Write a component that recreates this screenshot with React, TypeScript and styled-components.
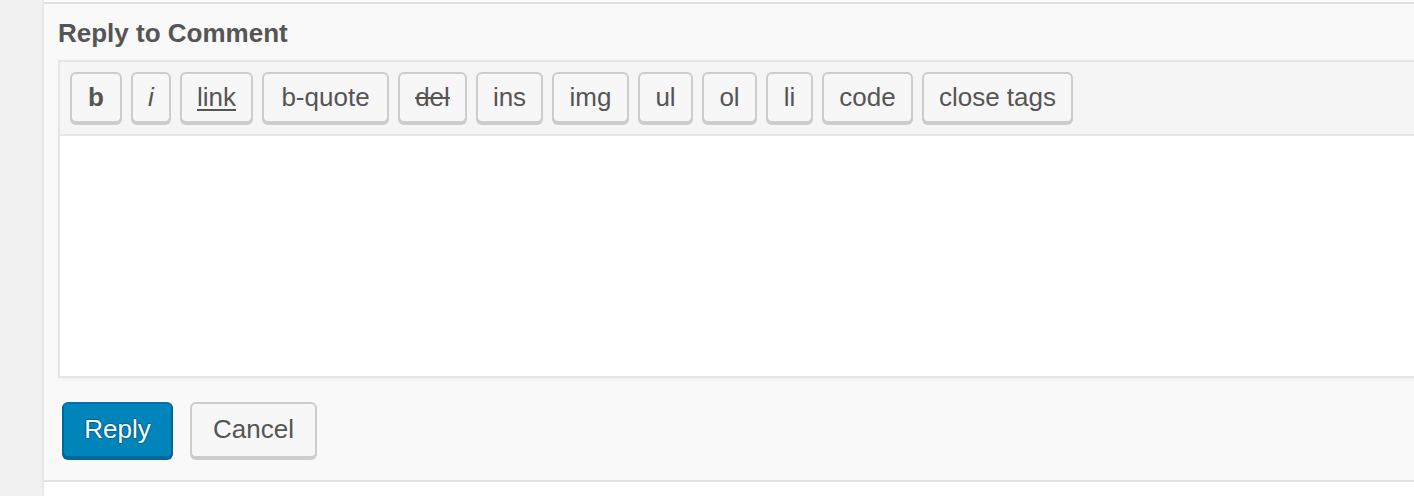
import React from "react";
import styled, { createGlobalStyle, css } from "styled-components";

const Global = createGlobalStyle`
  html, body { margin: 0; padding: 0; background: #fff; }
  body { font-family: "Liberation Sans", Arial, sans-serif; }
  * { box-sizing: border-box; }
`;

const Page = styled.div`
  display: flex;
  width: 1414px;
  height: 496px;
  overflow: hidden;
`;

const SideStrip = styled.div`
  flex: 0 0 44px;
  background: #f1f1f1;
  border-right: 2px solid #e8e8e8;
`;

const Main = styled.div`
  flex: 1;
  display: flex;
  flex-direction: column;
  padding-top: 2px;
  background: #fff;
  min-width: 0;
`;

const Panel = styled.div`
  background: #f9f9f9;
  border-top: 2px solid #e1e1e1;
  border-bottom: 2px solid #e1e1e1;
  padding: 14px 0 22px 14px;
`;

const Heading = styled.h3`
  margin: 0 0 12px 0;
  font-size: 26px;
  line-height: 30px;
  font-weight: 700;
  color: #555;
`;

const Editor = styled.div`
  margin-right: -20px;
  border: 2px solid #e5e5e5;
  box-shadow: 0 2px 5px rgba(0, 0, 0, 0.035);
`;

const Toolbar = styled.div`
  display: flex;
  align-items: flex-start;
  gap: 9px;
  padding: 10px 10px 11px 10px;
  background: #f5f5f5;
  border-bottom: 2px solid #e5e5e5;
`;

type TagKind = "bold" | "italic" | "link" | "del" | "plain";

const TagButton = styled.button<{ $w: number; $kind: TagKind }>`
  width: ${(p) => p.$w}px;
  height: 51px;
  padding: 0;
  margin: 0;
  border: 2px solid #ccc;
  border-radius: 6px;
  background: #f7f7f7;
  box-shadow: 0 2px 0 #ccc;
  color: #555;
  font-family: "Liberation Sans", Arial, sans-serif;
  font-size: 26px;
  line-height: 47px;
  text-align: center;
  cursor: pointer;
  ${(p) =>
    p.$kind === "bold" &&
    css`
      font-weight: 700;
    `}
  ${(p) =>
    p.$kind === "italic" &&
    css`
      font-style: italic;
    `}
  ${(p) =>
    p.$kind === "link" &&
    css`
      text-decoration: underline;
      text-underline-offset: 3px;
    `}
  ${(p) =>
    p.$kind === "del" &&
    css`
      text-decoration: line-through;
    `}
`;

const TextArea = styled.textarea`
  display: block;
  width: 100%;
  height: 240px;
  margin: 0;
  border: none;
  outline: none;
  resize: none;
  background: #fff;
  font-family: "Liberation Sans", Arial, sans-serif;
  font-size: 26px;
`;

const Actions = styled.div`
  display: flex;
  align-items: flex-start;
  gap: 17px;
  margin: 24px 0 0 4px;
`;

const ActionButton = styled.button<{ $primary?: boolean; $w: number }>`
  width: ${(p) => p.$w}px;
  height: 56px;
  padding: 0 0 2px;
  margin: 0;
  border-radius: 6px;
  border: 2px solid;
  font-family: "Liberation Sans", Arial, sans-serif;
  font-size: 26px;
  line-height: 50px;
  text-align: center;
  cursor: pointer;
  ${(p) =>
    p.$primary
      ? css`
          background: #0085ba;
          border-color: #0073aa #006799 #006799;
          box-shadow: 0 2px 0 #006799;
          color: #fff;
          text-shadow: 0 -1px 1px #006799, 1px 0 1px #006799,
            0 1px 1px #006799, -1px 0 1px #006799;
        `
      : css`
          background: #f7f7f7;
          border-color: #ccc;
          box-shadow: 0 2px 0 #ccc;
          color: #555;
        `}
`;

const WhiteRest = styled.div`
  flex: 1;
  background: #fff;
`;

const tags: { label: string; w: number; kind: TagKind }[] = [
  { label: "b", w: 52, kind: "bold" },
  { label: "i", w: 40, kind: "italic" },
  { label: "link", w: 73, kind: "link" },
  { label: "b-quote", w: 127, kind: "plain" },
  { label: "del", w: 69, kind: "del" },
  { label: "ins", w: 67, kind: "plain" },
  { label: "img", w: 77, kind: "plain" },
  { label: "ul", w: 55, kind: "plain" },
  { label: "ol", w: 55, kind: "plain" },
  { label: "li", w: 47, kind: "plain" },
  { label: "code", w: 91, kind: "plain" },
  { label: "close tags", w: 151, kind: "plain" },
];

export default function App() {
  return (
    <>
      <Global />
      <Page>
        <SideStrip />
        <Main>
          <Panel>
            <Heading>Reply to Comment</Heading>
            <Editor>
              <Toolbar>
                {tags.map((t) => (
                  <TagButton key={t.label} $w={t.w} $kind={t.kind} type="button">
                    {t.label}
                  </TagButton>
                ))}
              </Toolbar>
              <TextArea />
            </Editor>
            <Actions>
              <ActionButton $primary $w={111} type="button">
                Reply
              </ActionButton>
              <ActionButton $w={127} type="button">
                Cancel
              </ActionButton>
            </Actions>
          </Panel>
          <WhiteRest />
        </Main>
      </Page>
    </>
  );
}
